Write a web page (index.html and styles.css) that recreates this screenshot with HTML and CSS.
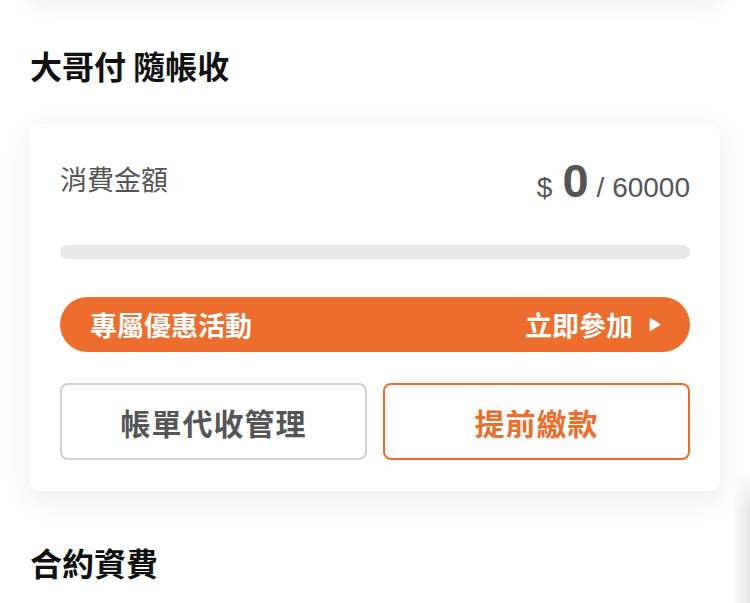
FILE: index.html
```html
<!DOCTYPE html>
<html lang="zh-Hant">
<head>
    <meta charset="UTF-8">
    <meta name="viewport" content="width=device-width, initial-scale=1.0">
    <title>大哥付 隨帳收</title>
    <link rel="stylesheet" href="styles.css">
</head>
<body>
    <div class="page">
        <div class="prev-card"></div>

        <h2 class="section-title">大哥付 隨帳收</h2>

        <div class="pay-card">
            <div class="usage-row">
                <span class="usage-label">消費金額</span>
                <span class="usage-amount">
                    <span class="currency">$</span>
                    <span class="used">0</span>
                    <span class="limit">/ 60000</span>
                </span>
            </div>

            <div class="progress">
                <div class="progress-fill" style="width: 0%"></div>
            </div>

            <a class="promo-bar" href="#">
                <span>專屬優惠活動</span>
                <span class="promo-cta">立即參加
                    <svg class="promo-arrow" viewBox="0 0 12 15" width="12" height="15">
                        <path d="M1.8 1.2 L10.6 6.6 Q11.6 7.5 10.6 8.4 L1.8 13.8 Q0.6 14.4 0.6 13 L0.6 2 Q0.6 0.6 1.8 1.2 Z" fill="#fff"/>
                    </svg>
                </span>
            </a>

            <div class="actions">
                <button class="btn btn-outline">帳單代收管理</button>
                <button class="btn btn-primary">提前繳款</button>
            </div>
        </div>

        <h2 class="section-title section-next">合約資費</h2>
    </div>
    <div class="edge-shadow"></div>
</body>
</html>
```

FILE: styles.css
```css
:root {
    --orange: #ec6d2c;
    --text: #111;
    --muted: #555;
    --line: #cfcfcf;
}

html, body {
    height: 100%;
}

body {
    margin: 0;
    background: #fff;
    font-family: 'Noto Sans CJK TC', 'Liberation Sans', sans-serif;
    color: var(--text);
    overflow: hidden;
    position: relative;
}

.page {
    display: flow-root;
    padding: 0 30px;
}

.prev-card {
    height: 40px;
    margin-top: -46px;
    background: #fff;
    border-radius: 10px;
    box-shadow: 0 6px 26px rgba(0, 0, 0, 0.09);
}

.section-title {
    margin: 0;
    font-size: 32px;
    line-height: 43px;
    font-weight: 700;
    color: var(--text);
}

.prev-card + .section-title {
    margin-top: 50px;
}

.pay-card {
    margin-top: 37px;
    padding: 28px 30px 31px;
    background: #fff;
    border-radius: 10px;
    box-shadow: 0 8px 30px rgba(0, 0, 0, 0.08);
}

.usage-row {
    display: flex;
    justify-content: space-between;
    align-items: center;
    height: 56px;
}

.usage-label {
    font-size: 27px;
    color: var(--muted);
    margin-top: -3px;
}

.usage-amount {
    display: flex;
    align-items: baseline;
    font-family: 'Liberation Sans', Arial, sans-serif;
    color: var(--muted);
    margin-top: 0;
}

.currency {
    font-size: 28px;
    margin-right: 10px;
}

.used {
    font-size: 47px;
    font-weight: 700;
    margin-right: 8px;
}

.limit {
    font-size: 28px;
}

.progress {
    margin-top: 37px;
    height: 14px;
    border-radius: 7px;
    background: #e8e8e8;
    overflow: hidden;
}

.progress-fill {
    height: 100%;
    background: var(--orange);
}

.promo-bar {
    margin-top: 38px;
    height: 55px;
    padding: 0 29px 0 30px;
    display: flex;
    justify-content: space-between;
    align-items: center;
    background: var(--orange);
    border-radius: 28px;
    color: #fff;
    font-size: 27px;
    font-weight: 700;
    text-decoration: none;
}

.promo-cta {
    display: flex;
    align-items: center;
    gap: 16px;
}

.promo-arrow {
    display: block;
}

.actions {
    margin-top: 31px;
    display: grid;
    grid-template-columns: 1fr 1fr;
    gap: 16px;
}

.btn {
    height: 77px;
    border-radius: 8px;
    background: #fff;
    font-family: inherit;
    font-size: 30px;
    font-weight: 700;
    letter-spacing: 1px;
    cursor: pointer;
}

.btn-outline {
    border: 2px solid var(--line);
    color: var(--muted);
}

.btn-primary {
    border: 2px solid var(--orange);
    color: var(--orange);
}

.section-next {
    margin-top: 50px;
}

/* shadow of the next card peeking in from the right */
.edge-shadow {
    position: absolute;
    right: 0;
    top: 470px;
    width: 18px;
    height: 133px;
    background: linear-gradient(to right, rgba(0, 0, 0, 0), rgba(0, 0, 0, 0.1));
    -webkit-mask-image: linear-gradient(to bottom, transparent, #000 40px);
    mask-image: linear-gradient(to bottom, transparent, #000 40px);
}
```
